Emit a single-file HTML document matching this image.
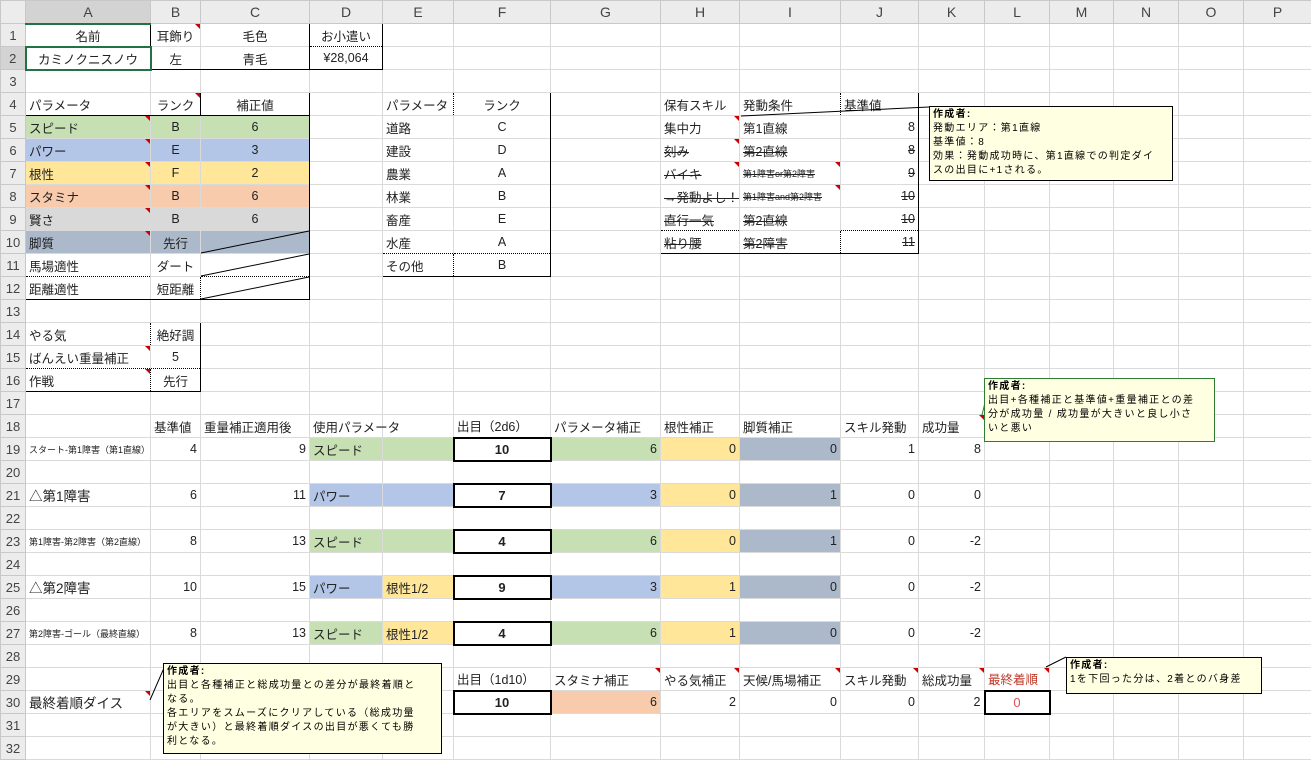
<!DOCTYPE html>
<html><head><meta charset="utf-8"><style>
body{margin:0;width:1311px;height:759px;overflow:hidden;background:#fff;font-family:"Liberation Sans","Noto Sans CJK JP",sans-serif;position:relative}
table{border-collapse:collapse;table-layout:fixed;position:absolute;left:0;top:0;width:1311px}
td{height:22px;padding:0 3px;border:1px solid #dadada;font-size:12.5px;color:#222;white-space:nowrap;overflow:visible;box-sizing:border-box}
tr{height:23px}
td.h{background:#ececec;color:#444;text-align:center;font-size:14px;padding:0;border-color:#c8c8c8}
td.rh{background:#ececec;color:#444;text-align:center;font-size:13px;padding:0;border-color:#c8c8c8}
.c{text-align:center}.r{text-align:right}
.g{background:#c6e0b4}.b{background:#b4c6e7}.y{background:#ffe699}.o{background:#f8cbad}.gr{background:#d9d9d9}.s{background:#acb9ca}
.bx{border:2px solid #000!important;text-align:center;font-weight:bold;font-size:13px}
.sm{font-size:9px}
.st{text-decoration:line-through}
.tri{position:relative}
.tri:after{content:"";position:absolute;right:0;top:0;border-top:5px solid #c00;border-left:5px solid transparent}
.cm{position:absolute;background:#ffffe1;border:1px solid #000;font-size:10px;line-height:14px;padding:1px 3px;color:#000;box-sizing:border-box;letter-spacing:1.3px;white-space:nowrap;overflow:hidden}
.cm b{font-weight:bold}
</style></head><body>
<table>
<colgroup><col style="width:25px"><col style="width:125px"><col style="width:50px"><col style="width:109px"><col style="width:73px"><col style="width:71px"><col style="width:97px"><col style="width:110px"><col style="width:79px"><col style="width:101px"><col style="width:78px"><col style="width:66px"><col style="width:65px"><col style="width:64px"><col style="width:65px"><col style="width:65px"><col style="width:68px"></colgroup>
<tr><td class="h"></td><td class="h" style="background:#d3d3d3;border-bottom:2px solid #217346">A</td><td class="h">B</td><td class="h">C</td><td class="h">D</td><td class="h">E</td><td class="h">F</td><td class="h">G</td><td class="h">H</td><td class="h">I</td><td class="h">J</td><td class="h">K</td><td class="h">L</td><td class="h">M</td><td class="h">N</td><td class="h">O</td><td class="h">P</td></tr>
<tr><td class="rh">1</td><td class="c" style="border:1px solid #000;border-bottom:1px dotted #000">名前</td><td class="c tri" style="border-top:1px solid #000;border-bottom:1px dotted #000;border-right:1px dotted #000">耳飾り</td><td class="c" style="border-top:1px solid #000;border-bottom:1px dotted #000;border-right:1px solid #000">毛色</td><td class="c" style="border:1px solid #000;border-bottom:1px dotted #000">お小遣い</td><td></td><td></td><td></td><td></td><td></td><td></td><td></td><td></td><td></td><td></td><td></td><td></td></tr>
<tr><td class="rh" style="background:#d3d3d3">2</td><td class="c" style="border:2px solid #217346">カミノクニスノウ</td><td class="c" style="border-bottom:1px solid #000;border-right:1px dotted #000">左</td><td class="c" style="border-bottom:1px solid #000;border-right:1px solid #000">青毛</td><td class="c" style="border:1px solid #000;border-top:none">¥28,064</td><td></td><td></td><td></td><td></td><td></td><td></td><td></td><td></td><td></td><td></td><td></td><td></td></tr>
<tr><td class="rh">3</td><td></td><td></td><td></td><td></td><td></td><td></td><td></td><td></td><td></td><td></td><td></td><td></td><td></td><td></td><td></td><td></td></tr>
<tr><td class="rh">4</td><td style="border:1px solid #000;border-right:1px dotted #000">パラメータ</td><td class="c tri" style="border-top:1px solid #000;border-right:1px dotted #000;border-bottom:1px solid #000">ランク</td><td class="c" style="border:1px solid #000">補正値</td><td></td><td style="border:1px solid #000;border-right:1px dotted #000;border-bottom:1px dotted #000">パラメータ</td><td class="c" style="border:1px solid #000;border-left:none;border-bottom:1px dotted #000">ランク</td><td></td><td style="border:1px solid #000;border-right:1px dotted #000;border-bottom:1px dotted #000">保有スキル</td><td style="border-top:1px solid #000;border-right:1px dotted #000;border-bottom:1px dotted #000">発動条件</td><td style="border:1px solid #000;border-left:none;border-bottom:1px dotted #000">基準値</td><td></td><td></td><td></td><td></td><td></td><td></td></tr>
<tr><td class="rh">5</td><td class="g tri" style="border-left:1px solid #000;border-bottom:1px dotted #000;border-right:1px dotted #000">スピード</td><td class="g c" style="border-bottom:1px dotted #000;border-right:1px dotted #000">B</td><td class="g c" style="border-right:1px solid #000;border-bottom:1px dotted #000">6</td><td></td><td style="border-left:1px solid #000;border-right:1px dotted #000;border-bottom:1px dotted #000">道路</td><td class="c" style="border-right:1px solid #000;border-bottom:1px dotted #000">C</td><td></td><td class="tri" style="border-left:1px solid #000;border-right:1px dotted #000;border-bottom:1px dotted #000">集中力</td><td style="border-right:1px dotted #000;border-bottom:1px dotted #000">第1直線</td><td class="r" style="border-right:1px solid #000;border-bottom:1px dotted #000">8</td><td></td><td></td><td></td><td></td><td></td><td></td></tr>
<tr><td class="rh">6</td><td class="b tri" style="border-left:1px solid #000;border-bottom:1px dotted #000;border-right:1px dotted #000">パワー</td><td class="b c" style="border-bottom:1px dotted #000;border-right:1px dotted #000">E</td><td class="b c" style="border-right:1px solid #000;border-bottom:1px dotted #000">3</td><td></td><td style="border-left:1px solid #000;border-right:1px dotted #000;border-bottom:1px dotted #000">建設</td><td class="c" style="border-right:1px solid #000;border-bottom:1px dotted #000">D</td><td></td><td class="st tri" style="border-left:1px solid #000;border-right:1px dotted #000;border-bottom:1px dotted #000">刻み</td><td class="st" style="border-right:1px dotted #000;border-bottom:1px dotted #000">第2直線</td><td class="r st" style="border-right:1px solid #000;border-bottom:1px dotted #000">8</td><td></td><td></td><td></td><td></td><td></td><td></td></tr>
<tr><td class="rh">7</td><td class="y tri" style="border-left:1px solid #000;border-bottom:1px dotted #000;border-right:1px dotted #000">根性</td><td class="y c" style="border-bottom:1px dotted #000;border-right:1px dotted #000">F</td><td class="y c" style="border-right:1px solid #000;border-bottom:1px dotted #000">2</td><td></td><td style="border-left:1px solid #000;border-right:1px dotted #000;border-bottom:1px dotted #000">農業</td><td class="c" style="border-right:1px solid #000;border-bottom:1px dotted #000">A</td><td></td><td class="st tri" style="border-left:1px solid #000;border-right:1px dotted #000;border-bottom:1px dotted #000">バイキ</td><td class="st sm tri" style="border-right:1px dotted #000;border-bottom:1px dotted #000">第1障害or第2障害</td><td class="r st" style="border-right:1px solid #000;border-bottom:1px dotted #000">9</td><td></td><td></td><td></td><td></td><td></td><td></td></tr>
<tr><td class="rh">8</td><td class="o tri" style="border-left:1px solid #000;border-bottom:1px dotted #000;border-right:1px dotted #000">スタミナ</td><td class="o c" style="border-bottom:1px dotted #000;border-right:1px dotted #000">B</td><td class="o c" style="border-right:1px solid #000;border-bottom:1px dotted #000">6</td><td></td><td style="border-left:1px solid #000;border-right:1px dotted #000;border-bottom:1px dotted #000">林業</td><td class="c" style="border-right:1px solid #000;border-bottom:1px dotted #000">B</td><td></td><td class="st" style="border-left:1px solid #000;border-right:1px dotted #000;border-bottom:1px dotted #000">→発動よし！</td><td class="st sm tri" style="border-right:1px dotted #000;border-bottom:1px dotted #000">第1障害and第2障害</td><td class="r st" style="border-right:1px solid #000;border-bottom:1px dotted #000">10</td><td></td><td></td><td></td><td></td><td></td><td></td></tr>
<tr><td class="rh">9</td><td class="gr tri" style="border-left:1px solid #000;border-bottom:1px dotted #000;border-right:1px dotted #000">賢さ</td><td class="gr c" style="border-bottom:1px dotted #000;border-right:1px dotted #000">B</td><td class="gr c" style="border-right:1px solid #000;border-bottom:1px dotted #000">6</td><td></td><td style="border-left:1px solid #000;border-right:1px dotted #000;border-bottom:1px dotted #000">畜産</td><td class="c" style="border-right:1px solid #000;border-bottom:1px dotted #000">E</td><td></td><td class="st" style="border-left:1px solid #000;border-right:1px dotted #000;border-bottom:1px dotted #000">直行一気</td><td class="st" style="border-right:1px dotted #000;border-bottom:1px dotted #000">第2直線</td><td class="r st" style="border-right:1px solid #000;border-bottom:1px dotted #000">10</td><td></td><td></td><td></td><td></td><td></td><td></td></tr>
<tr><td class="rh">10</td><td class="s tri" style="border-left:1px solid #000;border-bottom:1px dotted #000;border-right:1px dotted #000">脚質</td><td class="s c" style="border-bottom:1px dotted #000;border-right:1px dotted #000">先行</td><td class="s" style="border-right:1px solid #000;border-bottom:1px dotted #000"></td><td></td><td style="border-left:1px solid #000;border-right:1px dotted #000;border-bottom:1px dotted #000">水産</td><td class="c" style="border-right:1px solid #000;border-bottom:1px dotted #000">A</td><td></td><td class="st" style="border:1px solid #000;border-top:none;border-right:1px dotted #000">粘り腰</td><td class="st" style="border-bottom:1px solid #000;border-right:1px dotted #000">第2障害</td><td class="r st" style="border:1px solid #000;border-top:none;border-left:none">11</td><td></td><td></td><td></td><td></td><td></td><td></td></tr>
<tr><td class="rh">11</td><td style="border-left:1px solid #000;border-bottom:1px dotted #000;border-right:1px dotted #000">馬場適性</td><td class="c" style="border-bottom:1px dotted #000;border-right:1px dotted #000">ダート</td><td style="border-right:1px solid #000;border-bottom:1px dotted #000"></td><td></td><td style="border:1px solid #000;border-top:none;border-right:1px dotted #000">その他</td><td class="c" style="border:1px solid #000;border-top:none;border-left:none">B</td><td></td><td></td><td></td><td></td><td></td><td></td><td></td><td></td><td></td><td></td></tr>
<tr><td class="rh">12</td><td style="border:1px solid #000;border-top:none;border-right:1px dotted #000">距離適性</td><td class="c" style="border-bottom:1px solid #000;border-right:1px dotted #000">短距離</td><td style="border:1px solid #000;border-top:none;border-left:none"></td><td></td><td></td><td></td><td></td><td></td><td></td><td></td><td></td><td></td><td></td><td></td><td></td><td></td></tr>
<tr><td class="rh">13</td><td></td><td></td><td></td><td></td><td></td><td></td><td></td><td></td><td></td><td></td><td></td><td></td><td></td><td></td><td></td><td></td></tr>
<tr><td class="rh">14</td><td style="border:1px solid #000;border-bottom:1px dotted #000;border-right:1px dotted #000">やる気</td><td class="c" style="border:1px solid #000;border-left:none;border-bottom:1px dotted #000">絶好調</td><td></td><td></td><td></td><td></td><td></td><td></td><td></td><td></td><td></td><td></td><td></td><td></td><td></td><td></td></tr>
<tr><td class="rh">15</td><td class="tri" style="border-left:1px solid #000;border-bottom:1px dotted #000;border-right:1px dotted #000">ばんえい重量補正</td><td class="c" style="border-right:1px solid #000;border-bottom:1px dotted #000">5</td><td></td><td></td><td></td><td></td><td></td><td></td><td></td><td></td><td></td><td></td><td></td><td></td><td></td><td></td></tr>
<tr><td class="rh">16</td><td class="tri" style="border:1px solid #000;border-top:none;border-right:1px dotted #000">作戦</td><td class="c" style="border:1px solid #000;border-top:none;border-left:none">先行</td><td></td><td></td><td></td><td></td><td></td><td></td><td></td><td></td><td></td><td></td><td></td><td></td><td></td><td></td></tr>
<tr><td class="rh">17</td><td></td><td></td><td></td><td></td><td></td><td></td><td></td><td></td><td></td><td></td><td></td><td></td><td></td><td></td><td></td><td></td></tr>
<tr><td class="rh">18</td><td></td><td>基準値</td><td>重量補正適用後</td><td>使用パラメータ</td><td></td><td>出目（2d6）</td><td>パラメータ補正</td><td>根性補正</td><td>脚質補正</td><td>スキル発動</td><td class="tri">成功量</td><td></td><td></td><td></td><td></td><td></td></tr>
<tr><td class="rh">19</td><td class="sm">スタート-第1障害（第1直線）</td><td class="r">4</td><td class="r">9</td><td class="g">スピード</td><td class="g"></td><td class="bx">10</td><td class="g r">6</td><td class="y r">0</td><td class="s r">0</td><td class="r">1</td><td class="r">8</td><td></td><td></td><td></td><td></td><td></td></tr>
<tr><td class="rh">20</td><td></td><td></td><td></td><td></td><td></td><td></td><td></td><td></td><td></td><td></td><td></td><td></td><td></td><td></td><td></td><td></td></tr>
<tr><td class="rh">21</td><td style="font-size:13.5px">△第1障害</td><td class="r">6</td><td class="r">11</td><td class="b">パワー</td><td class="b"></td><td class="bx">7</td><td class="b r">3</td><td class="y r">0</td><td class="s r">1</td><td class="r">0</td><td class="r">0</td><td></td><td></td><td></td><td></td><td></td></tr>
<tr><td class="rh">22</td><td></td><td></td><td></td><td></td><td></td><td></td><td></td><td></td><td></td><td></td><td></td><td></td><td></td><td></td><td></td><td></td></tr>
<tr><td class="rh">23</td><td class="sm">第1障害-第2障害（第2直線）</td><td class="r">8</td><td class="r">13</td><td class="g">スピード</td><td class="g"></td><td class="bx">4</td><td class="g r">6</td><td class="y r">0</td><td class="s r">1</td><td class="r">0</td><td class="r">-2</td><td></td><td></td><td></td><td></td><td></td></tr>
<tr><td class="rh">24</td><td></td><td></td><td></td><td></td><td></td><td></td><td></td><td></td><td></td><td></td><td></td><td></td><td></td><td></td><td></td><td></td></tr>
<tr><td class="rh">25</td><td style="font-size:13.5px">△第2障害</td><td class="r">10</td><td class="r">15</td><td class="b">パワー</td><td class="y">根性1/2</td><td class="bx">9</td><td class="b r">3</td><td class="y r">1</td><td class="s r">0</td><td class="r">0</td><td class="r">-2</td><td></td><td></td><td></td><td></td><td></td></tr>
<tr><td class="rh">26</td><td></td><td></td><td></td><td></td><td></td><td></td><td></td><td></td><td></td><td></td><td></td><td></td><td></td><td></td><td></td><td></td></tr>
<tr><td class="rh">27</td><td class="sm">第2障害-ゴール（最終直線）</td><td class="r">8</td><td class="r">13</td><td class="g">スピード</td><td class="y">根性1/2</td><td class="bx">4</td><td class="g r">6</td><td class="y r">1</td><td class="s r">0</td><td class="r">0</td><td class="r">-2</td><td></td><td></td><td></td><td></td><td></td></tr>
<tr><td class="rh">28</td><td></td><td></td><td></td><td></td><td></td><td></td><td></td><td></td><td></td><td></td><td></td><td></td><td></td><td></td><td></td><td></td></tr>
<tr><td class="rh">29</td><td></td><td></td><td></td><td></td><td></td><td>出目（1d10）</td><td class="tri">スタミナ補正</td><td class="tri">やる気補正</td><td class="tri">天候/馬場補正</td><td class="tri">スキル発動</td><td class="tri">総成功量</td><td class="tri" style="color:#c0392b">最終着順</td><td></td><td></td><td></td><td></td></tr>
<tr><td class="rh">30</td><td class="tri" style="font-size:13.5px">最終着順ダイス</td><td></td><td></td><td></td><td></td><td class="bx">10</td><td class="o r">6</td><td class="r">2</td><td class="r">0</td><td class="r">0</td><td class="r">2</td><td class="bx" style="font-weight:normal;color:#e05050">0</td><td></td><td></td><td></td><td></td></tr>
<tr><td class="rh">31</td><td></td><td></td><td></td><td></td><td></td><td></td><td></td><td></td><td></td><td></td><td></td><td></td><td></td><td></td><td></td><td></td></tr>
<tr><td class="rh">32</td><td></td><td></td><td></td><td></td><td></td><td></td><td></td><td></td><td></td><td></td><td></td><td></td><td></td><td></td><td></td><td></td></tr>
</table>
<svg style="position:absolute;left:0;top:0" width="1311" height="759">
<line x1="201" y1="253" x2="309" y2="231" stroke="#000"/>
<line x1="201" y1="276" x2="309" y2="254" stroke="#000"/>
<line x1="201" y1="299" x2="309" y2="277" stroke="#000"/>
<line x1="741" y1="116" x2="929" y2="107" stroke="#000"/>
<line x1="982" y1="415" x2="990" y2="382" stroke="#2e7d32"/>
<line x1="150" y1="700" x2="164" y2="668" stroke="#000"/>
<line x1="1046" y1="667" x2="1066" y2="657" stroke="#000"/>
</svg>
<div class="cm" style="left:929px;top:106px;width:244px;height:75px"><b>作成者:</b><br>発動エリア：第1直線<br>基準値：8<br>効果：発動成功時に、第1直線での判定ダイ<br>スの出目に+1される。</div>
<div class="cm" style="left:984px;top:378px;width:231px;height:64px;border-color:#2e7d32"><b>作成者:</b><br>出目+各種補正と基準値+重量補正との差<br>分が成功量 / 成功量が大きいと良し小さ<br>いと悪い</div>
<div class="cm" style="left:163px;top:663px;width:279px;height:91px"><b>作成者:</b><br>出目と各種補正と総成功量との差分が最終着順と<br>なる。<br>各エリアをスムーズにクリアしている（総成功量<br>が大きい）と最終着順ダイスの出目が悪くても勝<br>利となる。</div>
<div class="cm" style="left:1066px;top:657px;width:196px;height:37px"><b>作成者:</b><br>1を下回った分は、2着とのバ身差</div>
</body></html>
